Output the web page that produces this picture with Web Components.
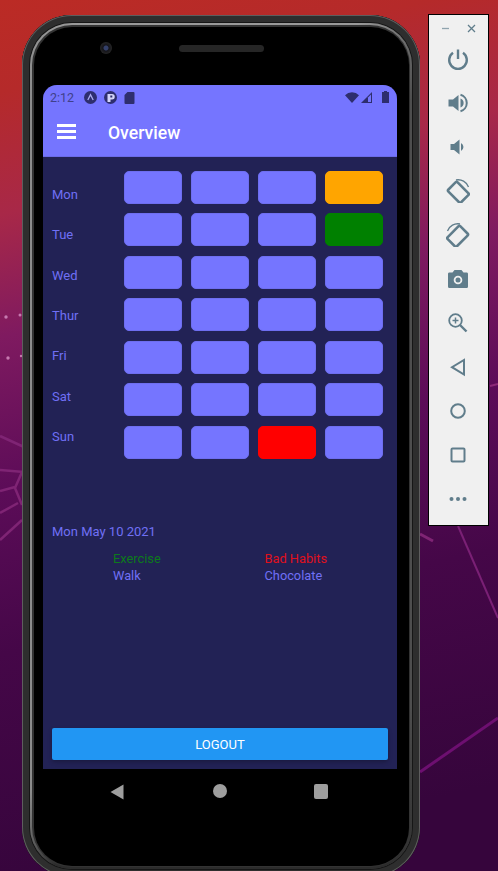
<!DOCTYPE html>
<html>
<head>
<meta charset="utf-8">
<title>Overview</title>
<style>
html, body { margin: 0; padding: 0; }
body { width: 498px; height: 871px; overflow: hidden; font-family: Roboto, "Liberation Sans", sans-serif; }
</style>
</head>
<body>
<desk-scene>
    <phone-frame>
        <status-bar></status-bar>
        <app-bar title="Overview"></app-bar>
        <overview-body></overview-body>
    </phone-frame>
    <emulator-toolbar></emulator-toolbar>
</desk-scene>

<script>
class DeskScene extends HTMLElement {
    constructor() {
        super();
        this.shadow = this.attachShadow({ mode: "open" });
    }

    connectedCallback() {
        this.shadow.innerHTML = `
            <style>
            :host {
                display: block;
                position: relative;
                width: 498px;
                height: 871px;
                overflow: hidden;
                background: linear-gradient(168deg, #bb2b25 0, #b52a2a 90px, #a82848 210px, #7f1a60 330px, #5c0c58 480px, #450748 640px, #36053c 871px);
            }
            svg { position: absolute; left: 0; top: 0; }
            </style>
            <!-- wallpaper lines and dots -->
            <svg width="498" height="871" fill="none">
                <g stroke="#7f2474" stroke-width="2.500">
                    <path d="M0 436 L24 447"/>
                    <path d="M0 470 L24 472"/>
                    <path d="M22 472 L15 488 L22 505"/>
                    <path d="M0 491 L15 487"/>
                    <path d="M0 513 L18 503"/>
                    <path d="M0 540 L22 520"/>
                    <path d="M420 534 L433 541" stroke-width="3"/>
                </g>
                <path d="M458 526 L498 618" stroke="#7a2075" stroke-width="2"/>
                <path d="M490 386 L498 384" stroke="#8d2a78" stroke-width="2"/>
                <path d="M420 772 L498 718" stroke="#6d0f70" stroke-width="3"/>
                <g fill="#c77ab0">
                    <circle cx="6" cy="317" r="1.700"/>
                    <circle cx="20" cy="315" r="1.500"/>
                    <circle cx="8" cy="358" r="1.700"/>
                    <circle cx="21" cy="356" r="1.200"/>
                </g>
            </svg>
            <slot></slot>
        `;
    }
}

class PhoneFrame extends HTMLElement {
    constructor() {
        super();
        this.shadow = this.attachShadow({ mode: "open" });
    }

    connectedCallback() {
        this.shadow.innerHTML = `
            <style>
            :host {
                display: block;
                position: absolute;
                left: 22px;
                top: 15px;
                width: 398px;
                height: 862px;
                box-sizing: border-box;
                border-radius: 50px;
                background: #000;
                box-shadow:
                    inset 0 0 0 1px #5e5e5e,
                    inset 0 0 0 7px #2e2e2e,
                    inset 0 0 0 8px #161616,
                    inset 0 0 0 12px #3a3a3a,
                    inset 0 0 0 13px #000;
            }
            /* the thin metal line of the bezel, lit from the top left */
            .ring {
                position: absolute;
                inset: 8px;
                box-sizing: border-box;
                border: 2.500px solid transparent;
                border-radius: 42px;
                background:
                    linear-gradient(#333, #333) padding-box,
                    conic-gradient(#9a9a9a 0 5%, #4e4e4e 8% 40%, #2c2c2c 44% 56%, #8c8c8c 58% 92%, #9a9a9a 95% 100%) border-box;
            }
            .ring::after {
                content: "";
                display: block;
                margin: 1.500px;
                height: calc(100% - 3px);
                border-radius: 38px;
                background: #000;
            }
            .camera {
                position: absolute;
                left: 78px;
                top: 27px;
                width: 12px;
                height: 12px;
                border-radius: 50%;
                background: radial-gradient(circle, #34406a 0 2px, #14141a 3px, #262626 6px);
            }
            .speaker {
                position: absolute;
                left: 157px;
                top: 30px;
                width: 85px;
                height: 7px;
                border-radius: 4px;
                background: #262626;
            }
            .screen {
                position: absolute;
                left: 21px;
                top: 70px;
                width: 354px;
                height: 684px;
                display: flex;
                flex-direction: column;
                background: #222255;
                border-radius: 14px 14px 0 0;
                overflow: hidden;
            }
            .nav {
                position: absolute;
                left: 21px;
                top: 761px;
                width: 354px;
                height: 30px;
            }
            .nav svg { position: absolute; top: 8px; }
            </style>
            <div class="ring"></div>
            <div class="camera"></div>
            <div class="speaker"></div>
            <div class="screen"><slot></slot></div>
            <div class="nav">
                <svg style="left:67px" width="14" height="16" viewBox="0 0 14 16"><path d="M13.500 .5 V15.500 L.5 8 Z" fill="#9e9e9e"/></svg>
                <svg style="left:170px" width="14" height="14" viewBox="0 0 14 14"><circle cx="7" cy="7" r="7" fill="#9e9e9e"/></svg>
                <svg style="left:271px" width="14" height="15" viewBox="0 0 14 15"><rect width="14" height="15" rx="2" fill="#9e9e9e"/></svg>
            </div>
        `;
    }
}

class StatusBar extends HTMLElement {
    constructor() {
        super();
        this.shadow = this.attachShadow({ mode: "open" });
    }

    connectedCallback() {
        this.shadow.innerHTML = `
            <style>
            :host {
                display: flex;
                align-items: center;
                flex: none;
                height: 24px;
                padding: 0 8px 0 7px;
                background: #7575ff;
                color: #40408a;
                font: 12.500px Roboto, sans-serif;
            }
            .time { width: 34px; }
            .left { display: flex; align-items: center; gap: 7px; }
            .right { display: flex; align-items: center; margin-left: auto; gap: 2px; }
            svg { display: block; }
            </style>
            <span class="time">2:12</span>
            <div class="left">
                <svg width="13" height="13" viewBox="0 0 13 13"><circle cx="6.500" cy="6.500" r="6.500" fill="#2e2e6e"/><path d="M3.800 9 L6.500 3.600 L9.200 9" fill="none" stroke="#aaaaee" stroke-width="1.300"/></svg>
                <svg width="13" height="13" viewBox="0 0 13 13"><circle cx="6.500" cy="6.500" r="6.500" fill="#2e2e6e"/><path d="M3.500 3 H8 A2.500 2.500 0 0 1 8 8.500 H6.500 V11 H3.500 Z" fill="#d4d4f8"/><rect x="6.300" y="4.500" width="2" height="2" fill="#2e2e6e"/></svg>
                <svg width="11" height="13" viewBox="0 0 11 13"><path d="M3.500 1 H9.500 A1 1 0 0 1 10.500 2 V12 A1 1 0 0 1 9.500 13 H1.500 A1 1 0 0 1 .5 12 V4 Z" fill="#2e2e6e"/></svg>
            </div>
            <div class="right">
                <svg width="14" height="11" viewBox="0 0 14 11"><path d="M0 3.200 A10 10 0 0 1 14 3.200 L7 11 Z" fill="#2e2e6e"/></svg>
                <svg width="12" height="11" viewBox="0 0 12 11"><path d="M0 11 L11 0 V11 Z" fill="#2e2e6e"/><path d="M7 5.500 L10 2.500 V10 H7 Z" fill="#7575ff"/></svg>
                <span style="width:5px"></span>
                <svg width="7" height="12" viewBox="0 0 7 12"><path d="M2 0 H5 V1 H7 V12 H0 V1 H2 Z" fill="#2e2e6e"/></svg>
            </div>
        `;
    }
}

class AppBar extends HTMLElement {
    constructor() {
        super();
        this.shadow = this.attachShadow({ mode: "open" });
    }

    connectedCallback() {
        this.shadow.innerHTML = `
            <style>
            :host {
                display: flex;
                align-items: center;
                flex: none;
                box-sizing: border-box;
                height: 48px;
                padding: 0 0 0 14px;
                background: #7575ff;
                border-bottom: 1px solid #6b6be8;
                color: #fff;
                font: 500 17.600px Roboto, sans-serif;
            }
            .burger { width: 19px; display: flex; flex-direction: column; gap: 3px; margin-right: 32px; margin-top: -2px; }
            .burger i { display: block; height: 3px; background: #fff; }
            .title { margin-top: 1px; }
            </style>
            <div class="burger"><i></i><i></i><i></i></div>
            <span class="title">${this.getAttribute("title")}</span>
        `;
    }
}

class HabitCell extends HTMLElement {
    constructor() {
        super();
        this.shadow = this.attachShadow({ mode: "open" });
    }

    connectedCallback() {
        const colour = this.getAttribute("colour");
        this.shadow.innerHTML = `
            <style>
            :host {
                display: block;
                box-sizing: border-box;
                height: 33px;
                border-radius: 5px;
                background: ${colour || "#7575ff"};
                border: 1px solid ${colour || "#6e6ef0"};
            }
            </style>
        `;
    }
}

class OverviewBody extends HTMLElement {
    constructor() {
        super();
        this.shadow = this.attachShadow({ mode: "open" });
    }

    connectedCallback() {
        const days = ["Mon", "Tue", "Wed", "Thur", "Fri", "Sat", "Sun"];
        // cells that have something logged, row:column
        const marked = { "0:3": "#ffa500", "1:3": "#008000", "6:2": "#ff0000" };
        let cells = "";
        days.forEach((day, row) => {
            for (let col = 0; col < 4; col++) {
                const colour = marked[row + ":" + col];
                cells += colour ? `<habit-cell colour="${colour}"></habit-cell>` : "<habit-cell></habit-cell>";
            }
        });

        this.shadow.innerHTML = `
            <style>
            :host {
                display: flex;
                flex-direction: column;
                flex: 1;
                box-sizing: border-box;
                padding: 13.700px 9px 9px;
                color: #7070f5;
                font: 13px Roboto, sans-serif;
            }
            .week { display: flex; }
            .days {
                width: 72px;
                padding-top: 3.400px;
                display: grid;
                grid-auto-rows: 40.400px;
                align-items: center;
                align-self: flex-start;
            }
            .cells {
                display: grid;
                grid-template-columns: repeat(4, 58.400px);
                column-gap: 8.600px;
                row-gap: 9.500px;
            }
            .date { margin-top: 65.300px; line-height: 16px; }
            .habits {
                display: grid;
                grid-template-columns: 151.500px 152px;
                padding-left: 61px;
                margin-top: 10px;
                line-height: 17px;
                font-size: 12.800px;
            }
            .good { color: #0d7a1c; }
            .bad { color: #e0101c; }
            .logout {
                margin-top: auto;
                height: 32px;
                display: flex;
                align-items: center;
                justify-content: center;
                border-radius: 2px;
                background: #2196f3;
                color: #fff;
                font-size: 13px;
                box-shadow: 0 2px 4px rgba(0, 0, 0, 0.25);
            }
            </style>
            <div class="week">
                <div class="days">${days.map(d => `<span>${d}</span>`).join("")}</div>
                <div class="cells">${cells}</div>
            </div>
            <div class="date">Mon May 10 2021</div>
            <div class="habits">
                <span class="good">Exercise</span>
                <span class="bad">Bad Habits</span>
                <span>Walk</span>
                <span>Chocolate</span>
            </div>
            <div class="logout">LOGOUT</div>
        `;
    }
}

class EmulatorToolbar extends HTMLElement {
    constructor() {
        super();
        this.shadow = this.attachShadow({ mode: "open" });
    }

    connectedCallback() {
        const fill = "#607d8b";
        const icons = [
            // power
            `<path d="M12 2.500 V12" stroke="${fill}" stroke-width="2.400" fill="none"/><path d="M7 5.800 A8.800 8.800 0 1 0 17 5.800" stroke="${fill}" stroke-width="2.400" fill="none"/>`,
            // volume up
            `<path d="M2.500 8.500 H7 L12.500 4 V20 L7 15.500 H2.500 Z" fill="${fill}"/><path d="M14.500 7.500 A4.800 4.800 0 0 1 14.500 16.500 Z" fill="${fill}"/><path d="M14.500 3.800 A8.500 8.500 0 0 1 14.500 20.200" stroke="${fill}" stroke-width="2" fill="none"/>`,
            // volume down
            `<path d="M4.500 9 H8 L13.500 4.500 V19.500 L8 15 H4.500 Z" fill="${fill}"/><path d="M15 8 A4.500 4.500 0 0 1 15 16 Z" fill="${fill}"/>`,
            // rotate left
            `<g transform="rotate(-45 12 13)"><rect x="5.500" y="4.500" width="13" height="18" rx="1.500" fill="none" stroke="${fill}" stroke-width="2.600"/></g><path d="M10 1 A11 11 0 0 1 22.500 8" stroke="${fill}" stroke-width="1.300" fill="none"/>`,
            // rotate right
            `<g transform="rotate(45 12 13)"><rect x="5.500" y="4.500" width="13" height="18" rx="1.500" fill="none" stroke="${fill}" stroke-width="2.600"/></g><path d="M1.500 8 A11 11 0 0 1 14 1" stroke="${fill}" stroke-width="1.300" fill="none"/>`,
            // camera
            `<path d="M8.500 3 H15.500 L17.500 5.500 H21 A1.500 1.500 0 0 1 22 7 V19.500 A1.500 1.500 0 0 1 21 21 H3 A1.500 1.500 0 0 1 2 19.500 V7 A1.500 1.500 0 0 1 3 5.500 H6.500 Z" fill="${fill}"/><circle cx="12" cy="13" r="4.300" fill="#f0f0f0"/><circle cx="12" cy="13" r="2.500" fill="${fill}"/>`,
            // zoom in
            `<circle cx="9.500" cy="9.500" r="6.300" fill="none" stroke="${fill}" stroke-width="1.800"/><path d="M14 14 L20.500 20.500" stroke="${fill}" stroke-width="2.400"/><path d="M9.500 6.500 V12.500 M6.500 9.500 H12.500" stroke="${fill}" stroke-width="1.500"/>`,
            // back
            `<path d="M18 5 V19.500 L6 12.200 Z" fill="none" stroke="${fill}" stroke-width="2"/>`,
            // home
            `<circle cx="12" cy="12" r="6.800" fill="none" stroke="${fill}" stroke-width="2"/>`,
            // overview
            `<rect x="5.500" y="5.500" width="13" height="13" rx="1" fill="none" stroke="${fill}" stroke-width="2"/>`,
            // more
            `<circle cx="5.500" cy="12" r="2" fill="${fill}"/><circle cx="12" cy="12" r="2" fill="${fill}"/><circle cx="18.500" cy="12" r="2" fill="${fill}"/>`
        ];

        this.shadow.innerHTML = `
            <style>
            :host {
                display: block;
                position: absolute;
                left: 428px;
                top: 14px;
                box-sizing: border-box;
                width: 61px;
                height: 512px;
                background: #f0f0f0;
                border: 1px solid #000;
                padding: 8px 1px 0 0;
            }
            .window { display: flex; justify-content: center; gap: 15px; height: 11px; margin: 0 -1px 13px 0; }
            .window svg { display: block; }
            .tools { display: flex; flex-direction: column; align-items: center; gap: 20px; }
            .tools svg { display: block; }
            </style>
            <div class="window">
                <svg width="11" height="11" viewBox="0 0 11 11"><path d="M2 5.500 H9" stroke="#90a4ae" stroke-width="1.300"/></svg>
                <svg width="11" height="11" viewBox="0 0 11 11"><path d="M2 2 L9 9 M9 2 L2 9" stroke="${fill}" stroke-width="1.300"/></svg>
            </div>
            <div class="tools">
                ${icons.map(i => `<svg width="24" height="24" viewBox="0 0 24 24">${i}</svg>`).join("")}
            </div>
        `;
    }
}

customElements.define("desk-scene", DeskScene);
customElements.define("phone-frame", PhoneFrame);
customElements.define("status-bar", StatusBar);
customElements.define("app-bar", AppBar);
customElements.define("habit-cell", HabitCell);
customElements.define("overview-body", OverviewBody);
customElements.define("emulator-toolbar", EmulatorToolbar);
</script>
</body>
</html>
